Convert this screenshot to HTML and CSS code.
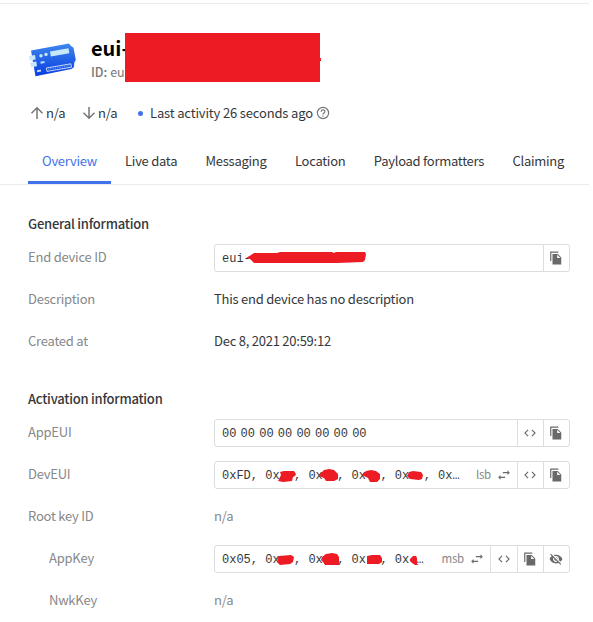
FILE: index.html
```html
<!DOCTYPE html>
<html lang="en">
<head>
<meta charset="utf-8">
<title>End device</title>
<link rel="stylesheet" href="styles.css">
</head>
<body>
<svg class="defs" aria-hidden="true">
  <symbol id="copy" viewBox="0 0 24 24"><path d="M16 1H2v16h2V3h12V1zm-1 4l6 6v12H6V5h9zm-1 7h5.500L14 6.500V12z"/></symbol>
  <symbol id="code" viewBox="0 0 24 24"><path d="M9.400 16.600L4.800 12l4.600-4.600L8 6l-6 6 6 6 1.400-1.400zm5.200 0l4.600-4.600-4.600-4.600L16 6l6 6-6 6-1.400-1.400z"/></symbol>
  <symbol id="swap" viewBox="0 0 24 24"><path d="M22 8l-4-4v3h-8v2h8v3l4-4zM2 16l4 4v-3h8v-2H6v-3l-4 4z"/></symbol>
  <symbol id="hide" viewBox="0 0 24 24"><path d="M12 7c2.760 0 5 2.240 5 5 0 .65-.13 1.260-.36 1.830l2.920 2.920c1.510-1.260 2.700-2.890 3.430-4.750-1.730-4.390-6-7.500-11-7.500-1.400 0-2.740.25-3.980.7l2.160 2.160C10.740 7.130 11.350 7 12 7zM2 4.270l2.280 2.280.46.46C3.080 8.300 1.780 10.020 1 12c1.730 4.390 6 7.500 11 7.500 1.550 0 3.030-.3 4.380-.84l.42.42L19.730 22 21 20.730 3.270 3 2 4.270zM7.530 9.800l1.550 1.550c-.05.21-.08.43-.08.65 0 1.660 1.340 3 3 3 .22 0 .44-.03.65-.08l1.550 1.550c-.67.33-1.410.53-2.200.53-2.760 0-5-2.240-5-5 0-.79.2-1.530.53-2.200zm4.310-.78l3.150 3.150.02-.16c0-1.660-1.340-3-3-3l-.17.01z"/></symbol>
  <symbol id="arrow" viewBox="0 0 14 14"><path d="M7 13V2M1.500 7.200L7 1.700l5.500 5.500" fill="none" stroke="currentColor" stroke-width="1.500"/></symbol>
</svg>
<div class="page">
  <header class="device">
    <svg class="board" viewBox="0 0 48 36">
      <defs><linearGradient id="blue" x1="0" y1="0" x2="0" y2="1"><stop offset="0" stop-color="#3d87ee"/><stop offset="1" stop-color="#0a3be0"/></linearGradient></defs>
      <path fill="url(#blue)" d="M2 8.500L40 1.600l1.500 2 3 2.200L46.800 18l-1.500 2.500-.3 4.500-2.500 2L6.500 34.200z"/>
      <path fill="#c7e9fb" d="M0 14l6-1 .7 4.500-6 1zM1.300 20.500l6-1 .7 4.700-6 1zM21 9.500l18.500-3.200.8 5-18.500 3.200z"/>
      <circle cx="12" cy="13.700" r="1.700" fill="#c7e9fb"/><circle cx="17" cy="12.400" r="1.700" fill="#c7e9fb"/>
      <path stroke="#b9ddfa" stroke-width="2" d="M11.500 20.700l4-.8M8 29.300l4-.7"/>
      <path fill="none" stroke="#d3eafc" stroke-width=".9" d="M17.300 26l24.500-4.200.7 3.400-24.500 4.200z"/>
      <path stroke="#8fbcf5" stroke-width=".8" stroke-dasharray="1.300 1" d="M19 27.400l21.500-3.700"/>
    </svg>
    <div class="names">
      <h1>eui-</h1>
      <p><b>ID:</b> eu</p>
    </div>
    <svg class="cover" viewBox="0 0 196 49"><path fill="#ed1c24" d="M0 0h195v25h1v3h-1v21H0z"/></svg>
  </header>
  <div class="status">
    <svg class="arrow"><use href="#arrow"/></svg><span class="up">n/a</span>
    <svg class="arrow down"><use href="#arrow"/></svg><span class="dn">n/a</span>
    <i class="dot"></i><span class="last">Last activity 26 seconds ago</span>
    <svg class="help" viewBox="0 0 14 14"><circle cx="7" cy="7" r="5.600"/><path d="M5.100 5.700c0-2.500 3.800-2.400 3.800-.1 0 1.400-1.900 1.500-1.900 3M7 9.600v1.200"/></svg>
  </div>
  <nav class="tabs">
    <a class="on"><span>Overview</span></a><a><span>Live data</span></a><a><span>Messaging</span></a><a><span>Location</span></a><a><span>Payload formatters</span></a><a><span>Claiming</span></a>
  </nav>
  <section>
    <h2>General information</h2>
    <div class="row"><label>End device ID</label>
      <div class="field"><code>eui-</code>
        <svg class="marks" viewBox="0 0 300 28"><path fill="#ed1c24" d="M31 13l5-3 3-2h23l3-1h52l2 1 2-1h29l1 2-1 6-2 2-26 1H39l-4-4z"/></svg>
        <button><svg><use href="#copy"/></svg></button></div></div>
    <div class="row"><label>Description</label><span class="desc">This end device has no description</span></div>
    <div class="row"><label>Created at</label><span class="date">Dec 8, 2021 20:59:12</span></div>
  </section>
  <section>
    <h2>Activation information</h2>
    <div class="row"><label>AppEUI</label>
      <div class="field"><code class="bytes"><span>00</span><span>00</span><span>00</span><span>00</span><span>00</span><span>00</span><span>00</span><span>00</span></code>
        <button><svg><use href="#code"/></svg></button><button><svg><use href="#copy"/></svg></button></div></div>
    <div class="row"><label>DevEUI</label>
      <div class="field"><code>0xFD, 0x&nbsp;&nbsp;, 0x&nbsp;&nbsp;, 0x&nbsp;&nbsp;, 0x&nbsp;&nbsp;, 0x…</code>
        <svg class="marks" viewBox="0 0 300 28"><path fill="#ed1c24" d="M65 10l4-1h10l2 3-1 2-2 1-1 4-9 1-5-1 1-2 2-4zM106 11l3-3 5-1 5 1 4 4v5l-4 2H111l-2-3-5-2zM151 9l5-1 5 1 4 3v5l-3 3h-7l-2-4-6-3zM194 10l4-1 8 1 2 3-1 4-3 1-9-1-3-3z"/></svg>
        <button class="order"><span>lsb</span><svg><use href="#swap"/></svg></button><button><svg><use href="#code"/></svg></button><button><svg><use href="#copy"/></svg></button></div></div>
    <div class="row"><label>Root key ID</label><span class="muted">n/a</span></div>
    <div class="row sub"><label>AppKey</label>
      <div class="field"><code>0x05, 0x&nbsp;&nbsp;, 0x&nbsp;&nbsp;, 0x&nbsp;&nbsp;, 0x&nbsp;…</code>
        <svg class="marks" viewBox="0 0 300 28"><path fill="#ed1c24" d="M64 10l12-1 3 2-1 5-3 2-10 1-3-3 1-2-1-1zM107 11l4-3 6-1 5 1 2 3v8H110l-2-3-2-2zM152 10l5-1h8l2 3v4l-3 2h-12zM195 13l3-3h3l1 2v6l2 1h-4l-3-2-2-2z"/></svg>
        <button class="order"><span>msb</span><svg><use href="#swap"/></svg></button><button class="wide"><svg><use href="#code"/></svg></button><button><svg><use href="#copy"/></svg></button><button><svg><use href="#hide"/></svg></button></div></div>
    <div class="row sub"><label>NwkKey</label><span class="muted">n/a</span></div>
  </section>
</div>
</body>
</html>
```
FILE: styles.css
```css
* { box-sizing: border-box; }
body { margin: 0; background: #fff; color: #35373a; font: 13px/20px "Noto Sans CJK SC", "Open Sans", sans-serif; letter-spacing: -.23px; white-space: nowrap; overflow: hidden; }
h1, h2, p { margin: 0; }
svg { display: block; fill: currentColor; flex: none; }
.defs { display: none; }
.page { width: 589px; height: 622px; padding-top: 3px; }
.device { border-top: 1px solid #e9eaeb; height: 90px; padding: 32px 0 0 29px; display: flex; position: relative; }
.board { width: 48px; height: 36px; margin-top: 6px; }
.names { margin-left: 14px; }
h1 { color: #000; font-size: 20px; line-height: 24px; font-weight: 700; letter-spacing: 0; }
.names p { color: #777; line-height: 24px; font-size: 12.500px; letter-spacing: 0; }
.names b { font-weight: 500; }
.cover { position: absolute; left: 125px; top: 29px; width: 196px; height: 49px; }
.status { display: flex; align-items: center; height: 40px; padding-left: 30px; letter-spacing: -.16px; }
.arrow { width: 14px; height: 14px; color: #777; }
.down { transform: rotate(180deg); }
.up { width: 36px; margin-left: 2px; }
.dn { width: 35px; margin-left: 2px; }
.dot { width: 5px; height: 5px; border-radius: 50%; background: #4272eb; margin-left: 5px; margin-right: 7px; }
.last { width: 162px; }
.help { width: 14px; height: 14px; margin-left: 4px; fill: none; stroke: #777; stroke-width: 1.200; }
.tabs { display: flex; height: 52px; border-bottom: 1px solid #eaebec; padding-left: 28px; letter-spacing: -.27px; }
.tabs a { padding: 18px 14.200px 0; height: 52px; line-height: 20px; }
.tabs .on { padding: 18px 14px 0; color: #4272eb; border-bottom: 3px solid #4272eb; height: 51px; }
section { padding: 0 19px 0 28px; margin-top: 26px; }
section + section { margin-top: 23px; }
h2 { font-size: 13px; font-weight: 500; line-height: 26px; height: 26px; }
.row { display: flex; align-items: center; height: 42px; }
.row label { width: 186px; color: #868889; }
.row > label, .row > span { padding-bottom: 2px; }
.row .date, .row .desc { letter-spacing: -.24px; }
.sub { padding-left: 21px; }
.row.sub label { width: 165px; }
.muted { color: #868889; }
.field { position: relative; display: flex; width: 356px; height: 28px; border: 1px solid #dcdddf; border-radius: 3px; }
code { flex: 1; padding-left: 7px; font: 12px/28px "Liberation Mono", monospace; letter-spacing: 0; }
.bytes { display: flex; gap: 4.200px; }
.marks { position: absolute; left: 0; top: 0; width: 300px; height: 28px; }
button { display: flex; align-items: center; justify-content: center; width: 26px; padding: 0 1px 0 0; border: 0; border-left: 1px solid #dcdddf; background: none; color: #68696b; font: inherit; letter-spacing: inherit; }
button svg { width: 14px; height: 14px; }
.wide { width: 27px; }
.order { width: auto; border: 0; padding-right: 6px; gap: 6px; color: #868889; font-size: 11.500px; }
.order span { padding-bottom: 2px; }
.order svg { color: #68696b; }
```
